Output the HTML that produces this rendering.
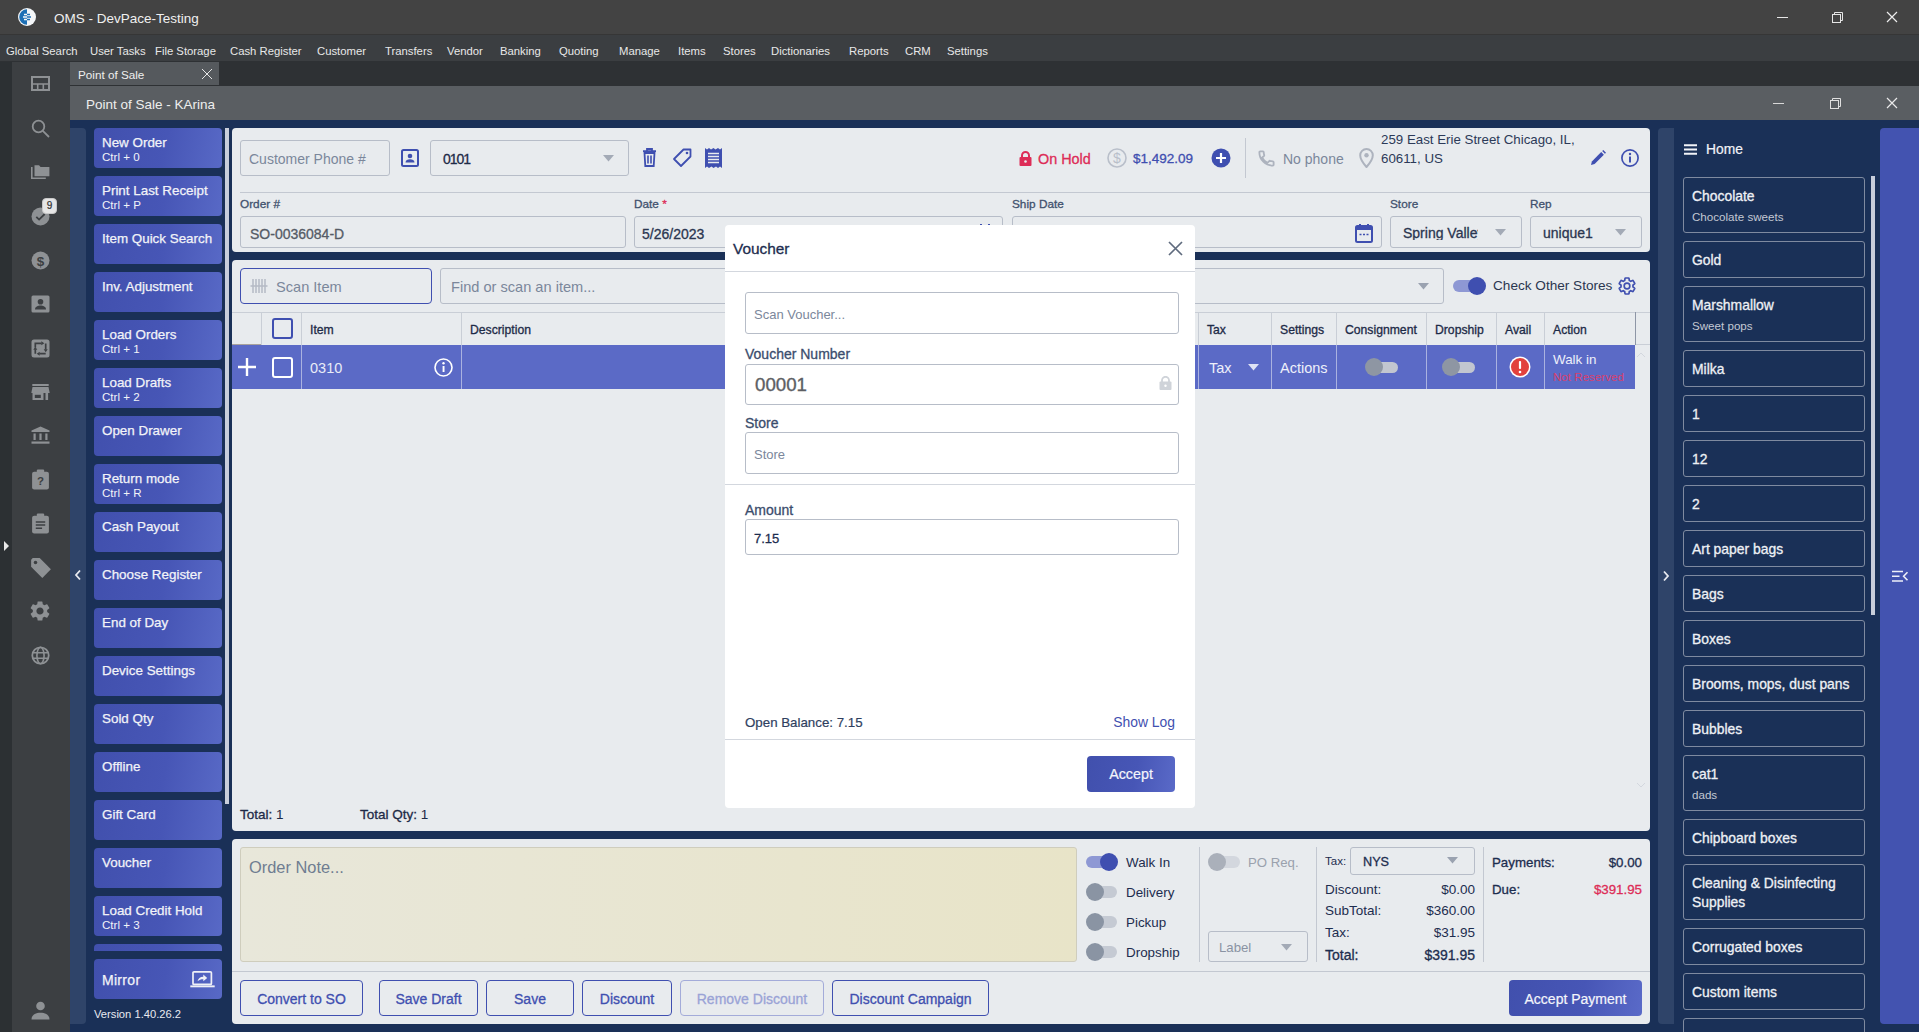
<!DOCTYPE html>
<html><head><meta charset="utf-8">
<style>
*{box-sizing:border-box;margin:0;padding:0}
html,body{width:1919px;height:1032px;overflow:hidden;background:#1a3057;font-family:"Liberation Sans",sans-serif}
.a{position:absolute}
.t{position:absolute;white-space:nowrap;line-height:1}
#titlebar{left:0;top:0;width:1919px;height:34px;background:#434343}
#menubar{left:0;top:35px;width:1919px;height:26px;background:#3b3e41;box-shadow:0 -1px 0 #363636}
#strip{left:0;top:61px;width:12px;height:971px;background:#2c3033}
#iconbar{left:12px;top:62px;width:58px;height:970px;background:#3c3f42}
#tabstrip{left:70px;top:61px;width:1849px;height:25px;background:#2e3134}
#tab{left:70px;top:62px;width:149px;height:23px;background:#55595d}
#winhdr{left:70px;top:86px;width:1849px;height:34px;background:#5a5e62}
#body{left:70px;top:120px;width:1849px;height:912px;background:#1a3057}
.menu{top:45.5px;font-size:11.3px;color:#e8e8e8}
.btn{position:absolute;left:94px;width:128px;height:40px;border-radius:4px;background:linear-gradient(100deg,#4150ad 0%,#4756b6 55%,#5869c6 100%);color:#f2f3f8}
.btn .l1{position:absolute;left:8px;top:8px;font-size:13.4px;-webkit-text-stroke:0.25px currentColor;white-space:nowrap;line-height:1}
.btn .l2{position:absolute;left:8px;top:22.5px;font-size:11.6px;white-space:nowrap;line-height:1}
.panel{position:absolute;background:#e8ebee;border-radius:4px}
.card{position:absolute;left:1683px;width:182px;border:1px solid #7f8aa0;border-radius:3px;color:#eef0f5}
.card .n{position:absolute;left:8px;font-size:13.9px;-webkit-text-stroke:0.3px currentColor;white-space:nowrap;line-height:1}
.card .s{position:absolute;left:8px;font-size:11.6px;color:#c3c8d3;white-space:nowrap;line-height:1}
.inp{border:1px solid #b7bdc8;border-radius:3px;background:#e8ebee}
.lbl{font-size:11.8px;-webkit-text-stroke:0.3px currentColor;color:#41516d;top:200.5px}
.vl{width:1px;background:#c9ced6}
.vl2{top:345px;width:1px;height:44px;background:#aab2e0}
.th{top:324px;font-size:12.2px;-webkit-text-stroke:0.3px currentColor;color:#1d2a47}
.tg{font-size:13.4px;color:#1d2d4f}
.sm{font-size:13.5px;color:#1d2d4f}
.r{width:100px;text-align:right}
.ob{position:absolute;top:980px;height:36px;border:1.5px solid #3f4fb0;border-radius:4px;color:#3f4fb0;font-size:14px;-webkit-text-stroke:0.3px currentColor;text-align:center;line-height:33px;padding-top:1.5px;white-space:nowrap}
.minp{border:1px solid #b7bdc8;border-radius:3px;background:#fff}
.mlbl{font-size:14px;-webkit-text-stroke:0.3px currentColor;color:#3b4d6d}
.sb{-webkit-text-stroke:0.3px currentColor}
.ico{position:absolute;left:30px;width:20px;height:20px}
</style></head><body>
<div id="titlebar" class="a"></div>
<div id="menubar" class="a"></div>
<div id="strip" class="a"></div>
<div class="a" style="left:0;top:61px;width:70px;height:1px;background:#2e3134"></div>
<div id="iconbar" class="a"></div>
<div id="tabstrip" class="a"></div>
<div id="tab" class="a"></div>
<div id="winhdr" class="a"></div>
<div id="body" class="a"></div>

<!-- title -->
<div class="t" style="left:54px;top:11.5px;font-size:13.5px;color:#f0f0f0">OMS - DevPace-Testing</div>

<!-- menu -->
<div class="t menu" style="left:6px">Global Search</div>
<div class="t menu" style="left:90px">User Tasks</div>
<div class="t menu" style="left:155px">File Storage</div>
<div class="t menu" style="left:230px">Cash Register</div>
<div class="t menu" style="left:317px">Customer</div>
<div class="t menu" style="left:385px">Transfers</div>
<div class="t menu" style="left:447px">Vendor</div>
<div class="t menu" style="left:500px">Banking</div>
<div class="t menu" style="left:559px">Quoting</div>
<div class="t menu" style="left:619px">Manage</div>
<div class="t menu" style="left:678px">Items</div>
<div class="t menu" style="left:723px">Stores</div>
<div class="t menu" style="left:771px">Dictionaries</div>
<div class="t menu" style="left:849px">Reports</div>
<div class="t menu" style="left:905px">CRM</div>
<div class="t menu" style="left:947px">Settings</div>

<div class="t" style="left:78px;top:69px;font-size:11.7px;color:#eee">Point of Sale</div>
<div class="t" style="left:86px;top:97.5px;font-size:13.5px;color:#eee">Point of Sale - KArina</div>

<!-- left collapse panel -->
<div class="a" style="left:70px;top:128px;width:16px;height:896px;background:#2f4469;border-radius:0 4px 4px 0"></div>

<!-- buttons -->
<div class="btn" style="top:128px"><div class="l1">New Order</div><div class="l2">Ctrl + 0</div></div>
<div class="btn" style="top:176px"><div class="l1">Print Last Receipt</div><div class="l2">Ctrl + P</div></div>
<div class="btn" style="top:224px"><div class="l1">Item Quick Search</div></div>
<div class="btn" style="top:272px"><div class="l1">Inv. Adjustment</div></div>
<div class="btn" style="top:320px"><div class="l1">Load Orders</div><div class="l2">Ctrl + 1</div></div>
<div class="btn" style="top:368px"><div class="l1">Load Drafts</div><div class="l2">Ctrl + 2</div></div>
<div class="btn" style="top:416px"><div class="l1">Open Drawer</div></div>
<div class="btn" style="top:464px"><div class="l1">Return mode</div><div class="l2">Ctrl + R</div></div>
<div class="btn" style="top:512px"><div class="l1">Cash Payout</div></div>
<div class="btn" style="top:560px"><div class="l1">Choose Register</div></div>
<div class="btn" style="top:608px"><div class="l1">End of Day</div></div>
<div class="btn" style="top:656px"><div class="l1">Device Settings</div></div>
<div class="btn" style="top:704px"><div class="l1">Sold Qty</div></div>
<div class="btn" style="top:752px"><div class="l1">Offline</div></div>
<div class="btn" style="top:800px"><div class="l1">Gift Card</div></div>
<div class="btn" style="top:848px"><div class="l1">Voucher</div></div>
<div class="btn" style="top:896px"><div class="l1">Load Credit Hold</div><div class="l2">Ctrl + 3</div></div>
<div class="btn" style="top:944px;height:7px;border-radius:4px 4px 0 0"></div>
<div class="btn" style="top:959px"><div class="l1" style="top:14px;font-size:14px;letter-spacing:0.3px">Mirror</div></div>
<div class="t" style="left:94px;top:1008.5px;font-size:11.2px;color:#e8eaf0">Version 1.40.26.2</div>
<!-- left scrollbar -->
<div class="a" style="left:225px;top:128px;width:4px;height:676px;background:#c8cedb"></div>

<!-- main panels -->
<div class="panel" style="left:232px;top:128px;width:1418px;height:124px"></div>
<div class="panel" style="left:232px;top:260px;width:1418px;height:571px"></div>
<div class="panel" style="left:232px;top:839px;width:1418px;height:185px"></div>

<!-- right collapse panel -->
<div class="a" style="left:1658px;top:128px;width:16px;height:896px;background:#2f4469;border-radius:4px 0 0 4px"></div>
<!-- right purple -->
<div class="a" style="left:1880px;top:128px;width:39px;height:896px;background:#4353b0;border-radius:4px 0 0 4px"></div>



<!-- logo -->
<svg class="a" style="left:18px;top:8px" width="18" height="18" viewBox="0 0 18 18">
<circle cx="9" cy="9" r="9" fill="#f4f6f8"/>
<path d="M9 1.2 A7.8 7.8 0 0 0 9 16.8 Z" fill="#1c6fb5"/>
<path d="M6 6.5h6M5 9h8M6 11.5h6" stroke="#1c6fb5" stroke-width="1.6"/>
<path d="M6 6.5h3M5 9h4M6 11.5h3" stroke="#f4f6f8" stroke-width="1.6"/>
</svg>
<!-- title controls -->
<div class="a" style="left:1777px;top:17px;width:11px;height:1px;background:#e6e6e6"></div>
<svg class="a" style="left:1831px;top:11px" width="13" height="13" viewBox="0 0 13 13"><rect x="1.5" y="3.5" width="8" height="8" fill="none" stroke="#e6e6e6" stroke-width="1"/><path d="M3.5 3.5V1.5h8v8h-2" fill="none" stroke="#e6e6e6" stroke-width="1"/></svg>
<svg class="a" style="left:1886px;top:11px" width="12" height="12" viewBox="0 0 12 12"><path d="M1 1L11 11M11 1L1 11" stroke="#ededed" stroke-width="1.2"/></svg>
<!-- tab close -->
<svg class="a" style="left:201px;top:68px" width="12" height="12" viewBox="0 0 12 12"><path d="M1 1L11 11M11 1L1 11" stroke="#e6e6e6" stroke-width="1"/></svg>
<!-- window header controls -->
<div class="a" style="left:1773px;top:103px;width:11px;height:1px;background:#d8d8d8"></div>
<svg class="a" style="left:1829px;top:97px" width="13" height="13" viewBox="0 0 13 13"><rect x="1.5" y="3.5" width="8" height="8" fill="none" stroke="#e0e0e0" stroke-width="1"/><path d="M3.5 3.5V1.5h8v8h-2" fill="none" stroke="#e0e0e0" stroke-width="1"/></svg>
<svg class="a" style="left:1886px;top:97px" width="12" height="12" viewBox="0 0 12 12"><path d="M1 1L11 11M11 1L1 11" stroke="#eaeaea" stroke-width="1.2"/></svg>

<!-- left icon bar icons -->
<svg class="a" style="left:31px;top:76px" width="19" height="15" viewBox="0 0 19 15"><rect x="1" y="1" width="17" height="13" fill="none" stroke="#8e9194" stroke-width="2"/><path d="M1 8h17M6.7 8v6M12.3 8v6" stroke="#8e9194" stroke-width="1.6"/></svg>
<svg class="a" style="left:31px;top:119px" width="19" height="19" viewBox="0 0 19 19"><circle cx="7.5" cy="7.5" r="5.8" fill="none" stroke="#8e9194" stroke-width="1.8"/><path d="M11.6 11.6L18 18" stroke="#8e9194" stroke-width="1.8"/></svg>
<svg class="a" style="left:31px;top:164px" width="19" height="15" viewBox="0 0 19 15"><path d="M0.8 3v11.2h14" fill="none" stroke="#8e9194" stroke-width="1.6"/><path d="M3.5 1.2h4.5l1.6 1.8h8.8v9.3H3.5z" fill="#8e9194"/></svg>
<svg class="a" style="left:31px;top:207px" width="19" height="19" viewBox="0 0 19 19"><circle cx="9.5" cy="9.5" r="9" fill="#8e9194"/><path d="M5.3 9.8l2.8 2.8 5.6-5.6" fill="none" stroke="#3c3f42" stroke-width="1.8"/></svg>
<div class="a" style="left:42px;top:198px;width:15px;height:16px;background:#e6e6e6;border-radius:4px;border:1px solid #c8c8c8;font-size:10px;line-height:14px;text-align:center;color:#333;-webkit-text-stroke:0.2px currentColor">9</div>
<svg class="a" style="left:31px;top:251px" width="19" height="19" viewBox="0 0 19 19"><circle cx="9.5" cy="9.5" r="9" fill="#8e9194"/><text x="9.5" y="14.8" font-family="Liberation Sans" font-weight="bold" font-size="13.5" text-anchor="middle" fill="#3c3f42">$</text></svg>
<svg class="a" style="left:31px;top:295px" width="19" height="18" viewBox="0 0 19 18"><rect x="0.5" y="0.5" width="18" height="17" rx="1.5" fill="#8e9194"/><circle cx="9.5" cy="6.8" r="2.8" fill="#3c3f42"/><path d="M4 14.5c0-3 3-4 5.5-4s5.5 1 5.5 4z" fill="#3c3f42"/></svg>
<svg class="a" style="left:31px;top:339px" width="19" height="19" viewBox="0 0 19 19"><rect x="0.5" y="0.5" width="18" height="18" rx="2.5" fill="#8e9194"/><path d="M4.3 8.5V4.3h6.2M14.7 4.5v6M14.7 14.7H8.5M4.3 14.7v-4.5" fill="none" stroke="#3c3f42" stroke-width="1.7"/><path d="M10.3 2.3l3 2-3 2zM12.7 10.2l2 3 2-3zM8.7 12.7l-3 2 3 2zM2.3 10.7l2-3 2 3z" fill="#3c3f42"/></svg>
<svg class="a" style="left:31px;top:384px" width="19" height="17" viewBox="0 0 19 17"><rect x="1.3" y="0" width="16.4" height="2" fill="#8e9194"/><path d="M1.5 3h16l1.2 6H0.3z" fill="#8e9194"/><path d="M1.5 9h11v7h-11z" fill="#8e9194"/><rect x="3.8" y="10.8" width="6" height="3.2" fill="#3c3f42"/><rect x="14.5" y="9" width="2.6" height="7" fill="#8e9194"/></svg>
<svg class="a" style="left:31px;top:426px" width="19" height="18" viewBox="0 0 19 18"><path d="M9.5 0.5L18.5 4.5V6H0.5V4.5z" fill="#8e9194"/><path d="M2.5 7.5h2.2v6.5H2.5zM8.4 7.5h2.2v6.5H8.4zM14.3 7.5h2.2v6.5h-2.2z" fill="#8e9194"/><rect x="0.5" y="15.5" width="18" height="2.2" fill="#8e9194"/></svg>
<svg class="a" style="left:31px;top:469px" width="19" height="21" viewBox="0 0 17 20"><rect x="0.5" y="2.5" width="16" height="17" rx="2" fill="#8e9194"/><rect x="5" y="0.5" width="7" height="4" rx="1" fill="#8e9194"/><text x="8.5" y="15.5" font-family="Liberation Sans" font-weight="bold" font-size="11" text-anchor="middle" fill="#3c3f42">?</text></svg>
<svg class="a" style="left:31px;top:513px" width="19" height="21" viewBox="0 0 17 20"><rect x="0.5" y="2.5" width="16" height="17" rx="2" fill="#8e9194"/><rect x="5" y="0.5" width="7" height="4" rx="1" fill="#8e9194"/><path d="M4 8.5h9M4 11.5h9M4 14.5h6" stroke="#3c3f42" stroke-width="1.5"/></svg>
<svg class="a" style="left:30px;top:557px" width="22" height="22" viewBox="0 0 20 20"><path d="M1 2.5V8.8L11.2 19 19 11.2 8.8 1H2.5z" fill="#8e9194"/><circle cx="5" cy="5" r="1.6" fill="#3c3f42"/></svg>
<svg class="a" style="left:28px;top:599px" width="24" height="24" viewBox="0 0 24 24"><path fill="#8e9194" d="M19.14 12.94c.04-.3.06-.61.06-.94 0-.32-.02-.64-.07-.94l2.03-1.58a.49.49 0 0 0 .12-.61l-1.92-3.32a.488.488 0 0 0-.59-.22l-2.39.96c-.5-.38-1.03-.7-1.62-.94l-.36-2.54a.484.484 0 0 0-.48-.41h-3.84c-.24 0-.43.17-.47.41l-.36 2.54c-.59.24-1.13.57-1.62.94l-2.39-.96c-.22-.08-.47 0-.59.22L2.74 8.87c-.12.21-.08.47.12.61l2.03 1.58c-.05.3-.09.63-.09.94s.02.64.07.94l-2.03 1.58a.49.49 0 0 0-.12.61l1.92 3.32c.12.22.37.29.59.22l2.39-.96c.5.38 1.03.7 1.62.94l.36 2.54c.05.24.24.41.48.41h3.84c.24 0 .44-.17.47-.41l.36-2.54c.59-.24 1.13-.56 1.62-.94l2.39.96c.22.08.47 0 .59-.22l1.92-3.32c.12-.22.07-.47-.12-.61l-2.01-1.58zM12 15.6c-1.98 0-3.6-1.62-3.6-3.6s1.62-3.6 3.6-3.6 3.6 1.62 3.6 3.6-1.62 3.6-3.6 3.6z"/></svg>
<svg class="a" style="left:31px;top:646px" width="19" height="19" viewBox="0 0 19 19"><circle cx="9.5" cy="9.5" r="8.2" fill="none" stroke="#8e9194" stroke-width="1.8"/><ellipse cx="9.5" cy="9.5" rx="3.6" ry="8.2" fill="none" stroke="#8e9194" stroke-width="1.6"/><path d="M1.5 6.8h16M1.5 12.2h16" stroke="#8e9194" stroke-width="1.6"/></svg>
<svg class="a" style="left:31px;top:1001px" width="19" height="19" viewBox="0 0 19 19"><circle cx="9.5" cy="5" r="4.3" fill="#8e9194"/><path d="M0.5 18.5c0-4.5 4-6.8 9-6.8s9 2.3 9 6.8z" fill="#8e9194"/></svg>
<!-- left strip arrow -->
<svg class="a" style="left:3px;top:540px" width="7" height="12" viewBox="0 0 7 12"><path d="M1 1l5 5-5 5z" fill="#e8e8e8"/></svg>
<!-- collapse arrows -->
<svg class="a" style="left:74px;top:569px" width="8" height="12" viewBox="0 0 8 12"><path d="M6 1.5L2 6l4 4.5" fill="none" stroke="#e8eaf0" stroke-width="1.8"/></svg>
<svg class="a" style="left:1662px;top:570px" width="8" height="12" viewBox="0 0 8 12"><path d="M2 1.5L6 6l-4 4.5" fill="none" stroke="#e8eaf0" stroke-width="1.8"/></svg>
<!-- mirror icon -->
<svg class="a" style="left:190px;top:970px" width="25" height="18" viewBox="0 0 25 18"><rect x="3" y="1.8" width="18.4" height="12.6" rx="1" fill="none" stroke="#eef0f6" stroke-width="1.7"/><rect x="0.3" y="15.4" width="24.4" height="1.9" fill="#eef0f6"/><path d="M7.5 11.3c.6-2.8 2.6-4.6 5.8-4.6V4.6l3.9 3.3-3.9 3.3V9.2c-2.5 0-4.3.6-5.8 2.1z" fill="#eef0f6"/></svg>


<!-- ===== TOP PANEL ===== -->
<div class="a inp" style="left:240px;top:140px;width:150px;height:36px"></div>
<div class="t" style="left:249px;top:152px;font-size:14px;color:#7b879b">Customer Phone #</div>
<svg class="a" style="left:401px;top:149px" width="18" height="18" viewBox="0 0 18 18"><rect x="1" y="1" width="16" height="16" rx="1.5" fill="none" stroke="#3f4fb0" stroke-width="2"/><circle cx="9" cy="7" r="2.3" fill="#3f4fb0"/><path d="M4.5 13.5c0-2.3 2.2-3.2 4.5-3.2s4.5.9 4.5 3.2z" fill="#3f4fb0"/></svg>
<div class="a inp" style="left:430px;top:140px;width:199px;height:36px"></div>
<div class="t" style="left:443px;top:152px;font-size:14px;-webkit-text-stroke:0.3px currentColor;color:#1d2a47;letter-spacing:-1px">0101</div>
<svg class="a" style="left:603px;top:155px" width="11" height="7" viewBox="0 0 11 7"><path d="M0 0h11L5.5 6.5z" fill="#a3aab6"/></svg>
<!-- trash -->
<svg class="a" style="left:642px;top:148px" width="15" height="19" viewBox="0 0 15 19"><path d="M1 3.2h13M5 3V1h5v2" fill="none" stroke="#3f4fb0" stroke-width="1.8"/><path d="M2.5 5h10l-.8 13H3.3z" fill="none" stroke="#3f4fb0" stroke-width="1.8"/><path d="M6 7.5v8M9 7.5v8" stroke="#3f4fb0" stroke-width="1.6"/></svg>
<!-- tag -->
<svg class="a" style="left:672px;top:148px" width="20" height="20" viewBox="0 0 20 20"><path d="M11.5 1.5h7v7L9 18 2 11z" fill="none" stroke="#3f4fb0" stroke-width="1.8" stroke-linejoin="round"/><circle cx="15" cy="5" r="1.3" fill="#3f4fb0"/></svg>
<!-- receipt -->
<svg class="a" style="left:704px;top:148px" width="19" height="20" viewBox="0 0 19 20"><path d="M1 0l2 1.5L5 0l2 1.5L9.5 0l2 1.5L14 0l2 1.5L18 0v20l-2-1.5L14 20l-2-1.5L9.5 20l-2-1.5L5 20l-2-1.5L1 20z" fill="#3f4fb0"/><path d="M4 5.5h11M4 8.5h11M4 11.5h11M4 14.5h11" stroke="#e8ebee" stroke-width="1.5"/></svg>

<!-- on hold -->
<svg class="a" style="left:1019px;top:151px" width="13" height="15" viewBox="0 0 13 15"><path d="M3 6.5V4.5a3.5 3.5 0 0 1 7 0v2" fill="none" stroke="#dd2c57" stroke-width="2"/><rect x="0.5" y="6" width="12" height="9" rx="1" fill="#dd2c57"/><circle cx="6.5" cy="10.5" r="1.3" fill="#e8ebee"/></svg>
<div class="t" style="left:1038px;top:151.7px;font-size:14.4px;-webkit-text-stroke:0.3px currentColor;color:#dd2c57">On Hold</div>
<svg class="a" style="left:1107px;top:148px" width="20" height="20" viewBox="0 0 20 20"><circle cx="10" cy="10" r="9" fill="none" stroke="#b9bfca" stroke-width="1.6"/><text x="10" y="15" font-family="Liberation Sans" font-size="14" text-anchor="middle" fill="#b9bfca">$</text></svg>
<div class="t" style="left:1133px;top:152.4px;font-size:13.5px;-webkit-text-stroke:0.3px currentColor;color:#3f4fb0">$1,492.09</div>
<svg class="a" style="left:1211px;top:148px" width="20" height="20" viewBox="0 0 20 20"><circle cx="10" cy="10" r="9.5" fill="#3f4fb0"/><path d="M10 5v10M5 10h10" stroke="#fff" stroke-width="2.2"/></svg>
<div class="a" style="left:1245px;top:138px;width:1px;height:40px;background:#c3c8d1"></div>
<svg class="a" style="left:1257px;top:149px" width="19" height="19" viewBox="0 0 24 24"><path fill="none" stroke="#adb3be" stroke-width="2.3" d="M6.6 10.8c1.4 2.8 3.8 5.1 6.6 6.6l2.2-2.2c.3-.3.7-.4 1-.2 1.1.4 2.3.6 3.6.6.6 0 1 .4 1 1V20c0 .6-.4 1-1 1C10.6 21 3 13.4 3 4c0-.6.4-1 1-1h3.5c.6 0 1 .4 1 1 0 1.3.2 2.5.6 3.6.1.3 0 .7-.2 1z"/></svg>
<div class="t" style="left:1283px;top:152px;font-size:14px;color:#7b879b">No phone</div>
<svg class="a" style="left:1359px;top:148px" width="15" height="20" viewBox="0 0 15 20"><path d="M7.5 1a6.3 6.3 0 0 0-6.3 6.3c0 4.7 6.3 11.7 6.3 11.7s6.3-7 6.3-11.7A6.3 6.3 0 0 0 7.5 1z" fill="none" stroke="#adb3be" stroke-width="2"/><circle cx="7.5" cy="7.3" r="2.2" fill="#adb3be"/></svg>
<div class="t" style="left:1381px;top:132.7px;font-size:13.3px;color:#2c3a58">259 East Erie Street Chicago, IL,</div>
<div class="t" style="left:1381px;top:151.7px;font-size:13.3px;color:#2c3a58">60611, US</div>
<svg class="a" style="left:1590px;top:150px" width="16" height="16" viewBox="0 0 16 16"><path d="M1 15l.9-3.6L11.2 2.1l2.7 2.7-9.3 9.3z" fill="#3f4fb0"/><path d="M12.2 1.1l1.1-1.1 2.7 2.7-1.1 1.1z" fill="#3f4fb0"/></svg>
<svg class="a" style="left:1621px;top:149px" width="18" height="18" viewBox="0 0 18 18"><circle cx="9" cy="9" r="8.1" fill="none" stroke="#3f4fb0" stroke-width="1.7"/><rect x="8" y="7.5" width="2" height="6" fill="#3f4fb0"/><circle cx="9" cy="5" r="1.2" fill="#3f4fb0"/></svg>

<div class="a" style="left:240px;top:192px;width:1410px;height:1px;background:#c3c8d1"></div>
<div class="t lbl" style="left:240px;top:199px">Order #</div>
<div class="t lbl" style="left:634px;top:199px">Date <span style="color:#dd2c57">*</span></div>
<div class="t lbl" style="left:1012px;top:199px">Ship Date</div>
<div class="t lbl" style="left:1390px;top:199px">Store</div>
<div class="t lbl" style="left:1530px;top:199px">Rep</div>
<div class="a inp" style="left:240px;top:216px;width:386px;height:32px"></div>
<div class="t" style="left:250px;top:226.6px;font-size:14px;-webkit-text-stroke:0.3px currentColor;color:#555b66">SO-0036084-D</div>
<div class="a inp" style="left:634px;top:216px;width:369px;height:32px"></div>
<div class="t" style="left:642px;top:226.6px;font-size:14px;-webkit-text-stroke:0.3px currentColor;color:#2b3650">5/26/2023</div>
<div class="a inp" style="left:1012px;top:216px;width:370px;height:32px"></div>
<svg class="a" style="left:1355px;top:223px" width="18" height="20" viewBox="0 0 18 20"><rect x="1" y="3" width="16" height="16" rx="1.5" fill="none" stroke="#3f4fb0" stroke-width="2"/><rect x="1" y="3" width="16" height="4" fill="#3f4fb0"/><path d="M5 1v4M13 1v4" stroke="#3f4fb0" stroke-width="2"/><path d="M4.5 11.5h2M8 11.5h2M11.5 11.5h2" stroke="#3f4fb0" stroke-width="1.6"/></svg>
<div class="a inp" style="left:1390px;top:216px;width:132px;height:32px"></div>
<div class="t" style="left:1403px;top:226px;font-size:14px;-webkit-text-stroke:0.3px currentColor;color:#2b3650;width:75px;overflow:hidden">Spring Valley</div>
<svg class="a" style="left:1495px;top:229px" width="11" height="7" viewBox="0 0 11 7"><path d="M0 0h11L5.5 6.5z" fill="#a3aab6"/></svg>
<div class="a inp" style="left:1530px;top:216px;width:112px;height:32px"></div>
<div class="t" style="left:1543px;top:226px;font-size:14px;-webkit-text-stroke:0.3px currentColor;color:#2b3650">unique1</div>
<svg class="a" style="left:1615px;top:229px" width="11" height="7" viewBox="0 0 11 7"><path d="M0 0h11L5.5 6.5z" fill="#a3aab6"/></svg>


<!-- ===== ITEM PANEL ===== -->
<div class="a" style="left:240px;top:268px;width:192px;height:36px;border:1px solid #3f4fb0;border-radius:4px"></div>
<svg class="a" style="left:250px;top:278px" width="18" height="16" viewBox="0 0 18 16"><path d="M3 1v14M6 1v14M9 1v14M12 1v14M15 1v14" stroke="#b4bac5" stroke-width="1.5"/><path d="M0.5 8h17" stroke="#b4bac5" stroke-width="1.5"/></svg>
<div class="t" style="left:276px;top:279.7px;font-size:14.6px;color:#7b879b">Scan Item</div>
<div class="a inp" style="left:440px;top:268px;width:1004px;height:36px"></div>
<div class="t" style="left:451px;top:279.7px;font-size:14.6px;color:#7b879b">Find or scan an item...</div>
<svg class="a" style="left:1418px;top:283px" width="11" height="7" viewBox="0 0 11 7"><path d="M0 0h11L5.5 6.5z" fill="#9aa2b0"/></svg>
<!-- check other stores toggle -->
<div class="a" style="left:1453px;top:280px;width:30px;height:12px;border-radius:6px;background:#8e98d4"></div>
<div class="a" style="left:1468px;top:277px;width:18px;height:18px;border-radius:50%;background:#3f4fb0"></div>
<div class="t" style="left:1493px;top:279px;font-size:13.6px;color:#2b3650">Check Other Stores</div>
<svg class="a" style="left:1617px;top:276px" width="20" height="20" viewBox="0 0 24 24"><path fill="none" stroke="#3f4fb0" stroke-width="2" d="M19.14 12.94c.04-.3.06-.61.06-.94 0-.32-.02-.64-.07-.94l2.03-1.58a.49.49 0 0 0 .12-.61l-1.92-3.32a.488.488 0 0 0-.59-.22l-2.39.96c-.5-.38-1.03-.7-1.62-.94l-.36-2.54a.484.484 0 0 0-.48-.41h-3.84c-.24 0-.43.17-.47.41l-.36 2.54c-.59.24-1.13.57-1.62.94l-2.39-.96c-.22-.08-.47 0-.59.22L2.74 8.87c-.12.21-.08.47.12.61l2.03 1.58c-.05.3-.09.63-.09.94s.02.64.07.94l-2.03 1.58a.49.49 0 0 0-.12.61l1.92 3.32c.12.22.37.29.59.22l2.39-.96c.5.38 1.03.7 1.62.94l.36 2.54c.05.24.24.41.48.41h3.84c.24 0 .44-.17.47-.41l.36-2.54c.59-.24 1.13-.56 1.62-.94l2.39.96c.22.08.47 0 .59-.22l1.92-3.32c.12-.22.07-.47-.12-.61l-2.01-1.58z"/><circle cx="12" cy="12" r="3.4" fill="none" stroke="#3f4fb0" stroke-width="2"/></svg>

<!-- table header -->
<div class="a" style="left:232px;top:312px;width:1418px;height:1px;background:#c9ced6"></div>
<div class="a" style="left:232px;top:344px;width:30px;height:1px;background:#a9a29c"></div>
<div class="a vl" style="left:261px;top:312px;height:33px"></div>
<div class="a vl" style="left:301px;top:312px;height:77px"></div>
<div class="a vl" style="left:461px;top:312px;height:77px"></div>
<div class="a vl" style="left:1198px;top:312px;height:77px"></div>
<div class="a vl" style="left:1271px;top:312px;height:77px"></div>
<div class="a vl" style="left:1336px;top:312px;height:77px"></div>
<div class="a vl" style="left:1426px;top:312px;height:77px"></div>
<div class="a vl" style="left:1496px;top:312px;height:77px"></div>
<div class="a vl" style="left:1544px;top:312px;height:77px"></div>
<div class="a" style="left:1635px;top:312px;width:1px;height:33px;background:#8e96a6"></div>
<div class="a" style="left:1636px;top:344px;width:14px;height:1px;background:#c9ced6"></div>
<div class="a" style="left:272px;top:318px;width:21px;height:21px;border:2px solid #3f4fb0;border-radius:3px"></div>
<div class="t th" style="left:310px">Item</div>
<div class="t th" style="left:470px">Description</div>
<div class="t th" style="left:1207px">Tax</div>
<div class="t th" style="left:1280px">Settings</div>
<div class="t th" style="left:1345px">Consignment</div>
<div class="t th" style="left:1435px">Dropship</div>
<div class="t th" style="left:1505px">Avail</div>
<div class="t th" style="left:1553px">Action</div>
<!-- row -->
<div class="a" style="left:232px;top:345px;width:1403px;height:44px;background:#5b6ac6"></div>
<div class="a vl2" style="left:301px"></div>
<div class="a vl2" style="left:461px"></div>
<div class="a vl2" style="left:1198px"></div>
<div class="a vl2" style="left:1271px"></div>
<div class="a vl2" style="left:1336px"></div>
<div class="a vl2" style="left:1426px"></div>
<div class="a vl2" style="left:1496px"></div>
<div class="a vl2" style="left:1544px"></div>
<svg class="a" style="left:237px;top:357px" width="20" height="20" viewBox="0 0 20 20"><path d="M10 1v18M1 10h18" stroke="#fff" stroke-width="2.4"/></svg>
<div class="a" style="left:272px;top:357px;width:21px;height:21px;border:2px solid #fff;border-radius:3px"></div>
<div class="t" style="left:310px;top:361px;font-size:14.5px;color:#e9ecf7">0310</div>
<svg class="a" style="left:434px;top:358px" width="19" height="19" viewBox="0 0 19 19"><circle cx="9.5" cy="9.5" r="8.5" fill="none" stroke="#fff" stroke-width="1.6"/><rect x="8.6" y="8" width="1.9" height="6" fill="#fff"/><circle cx="9.5" cy="5.3" r="1.2" fill="#fff"/></svg>
<div class="t" style="left:1209px;top:361px;font-size:14.5px;color:#eef0fa">Tax</div>
<svg class="a" style="left:1248px;top:364px" width="11" height="7" viewBox="0 0 11 7"><path d="M0 0h11L5.5 6.5z" fill="#dfe3f5"/></svg>
<div class="t" style="left:1280px;top:361px;font-size:14.5px;color:#eef0fa">Actions</div>
<div class="a" style="left:1369px;top:362px;width:29px;height:11px;border-radius:6px;background:#c2c6d0"></div>
<div class="a" style="left:1365px;top:358px;width:18px;height:18px;border-radius:50%;background:#8e96a3"></div>
<div class="a" style="left:1446px;top:362px;width:29px;height:11px;border-radius:6px;background:#c2c6d0"></div>
<div class="a" style="left:1442px;top:358px;width:18px;height:18px;border-radius:50%;background:#8e96a3"></div>
<svg class="a" style="left:1509px;top:356px" width="22" height="22" viewBox="0 0 22 22"><circle cx="11" cy="11" r="10.5" fill="#fff"/><circle cx="11" cy="11" r="9" fill="#e2413d"/><rect x="9.9" y="5" width="2.2" height="8" rx="1" fill="#fff"/><circle cx="11" cy="16" r="1.3" fill="#fff"/></svg>
<div class="t" style="left:1553px;top:353px;font-size:13.4px;color:#eef0fa">Walk in</div>
<div class="t" style="left:1553px;top:371px;font-size:11.6px;color:#d8406e">Not Reserved</div>
<!-- scroll arrows faint -->
<svg class="a" style="left:1636px;top:352px" width="10" height="6" viewBox="0 0 10 6"><path d="M1 5l4-4 4 4" fill="none" stroke="#d3d7de" stroke-width="1"/></svg>
<svg class="a" style="left:1636px;top:782px" width="10" height="6" viewBox="0 0 10 6"><path d="M1 1l4 4 4-4" fill="none" stroke="#d3d7de" stroke-width="1"/></svg>

<div class="t" style="left:240px;top:808px;font-size:13.5px;color:#1d2a47"><span class="sb">Total:</span> 1</div>
<div class="t" style="left:360px;top:808px;font-size:13.5px;color:#1d2a47"><span class="sb">Total Qty:</span> 1</div>


<!-- ===== BOTTOM PANEL ===== -->
<div class="a" style="left:240px;top:847px;width:837px;height:115px;border:1px solid #cfcdbd;border-radius:3px;background:linear-gradient(90deg,#e8e7da 0%,#e8e4c8 100%)"></div>
<div class="t" style="left:249px;top:859.2px;font-size:16.4px;color:#6f7d91">Order Note...</div>
<!-- toggles -->
<div class="a" style="left:1086px;top:856px;width:30px;height:12px;border-radius:6px;background:#8e98d4"></div>
<div class="a" style="left:1100px;top:853px;width:18px;height:18px;border-radius:50%;background:#3f4fb0"></div>
<div class="t tg" style="left:1126px;top:855.7px">Walk In</div>
<div class="a" style="left:1087px;top:886px;width:30px;height:12px;border-radius:6px;background:#c5cad3"></div>
<div class="a" style="left:1086px;top:883px;width:18px;height:18px;border-radius:50%;background:#8a94a3"></div>
<div class="t tg" style="left:1126px;top:885.7px">Delivery</div>
<div class="a" style="left:1087px;top:916px;width:30px;height:12px;border-radius:6px;background:#c5cad3"></div>
<div class="a" style="left:1086px;top:913px;width:18px;height:18px;border-radius:50%;background:#8a94a3"></div>
<div class="t tg" style="left:1126px;top:915.7px">Pickup</div>
<div class="a" style="left:1087px;top:946px;width:30px;height:12px;border-radius:6px;background:#c5cad3"></div>
<div class="a" style="left:1086px;top:943px;width:18px;height:18px;border-radius:50%;background:#8a94a3"></div>
<div class="t tg" style="left:1126px;top:945.7px">Dropship</div>
<div class="a" style="left:1199px;top:847px;width:1px;height:115px;background:#c3c8d1"></div>
<div class="a" style="left:1316px;top:847px;width:1px;height:115px;background:#c3c8d1"></div>
<div class="a" style="left:1483px;top:847px;width:1px;height:115px;background:#c3c8d1"></div>
<div class="a" style="left:1209px;top:856px;width:31px;height:12px;border-radius:6px;background:#d3d7de"></div>
<div class="a" style="left:1208px;top:853px;width:18px;height:18px;border-radius:50%;background:#aab0ba"></div>
<div class="t" style="left:1248px;top:855.8px;font-size:13.2px;color:#9aa1ad">PO Req.</div>
<div class="a inp" style="left:1208px;top:931px;width:100px;height:31px"></div>
<div class="t" style="left:1219px;top:941.3px;font-size:13.2px;color:#8a93a3">Label</div>
<svg class="a" style="left:1281px;top:944px" width="11" height="7" viewBox="0 0 11 7"><path d="M0 0h11L5.5 6.5z" fill="#a3aab6"/></svg>
<div class="t" style="left:1325px;top:856.0px;font-size:11.5px;color:#1d2d4f">Tax:</div>
<div class="a inp" style="left:1350px;top:847px;width:125px;height:28px"></div>
<div class="t" style="left:1363px;top:855.8px;font-size:12.7px;-webkit-text-stroke:0.3px currentColor;color:#1d2d4f">NYS</div>
<svg class="a" style="left:1447px;top:857px" width="11" height="7" viewBox="0 0 11 7"><path d="M0 0h11L5.5 6.5z" fill="#9aa2b0"/></svg>
<div class="t sm" style="left:1325px;top:882.6px">Discount:</div>
<div class="t sm r" style="left:1375px;top:882.6px">$0.00</div>
<div class="t sm" style="left:1325px;top:904.3px">SubTotal:</div>
<div class="t sm r" style="left:1375px;top:904.3px">$360.00</div>
<div class="t sm" style="left:1325px;top:925.8px">Tax:</div>
<div class="t sm r" style="left:1375px;top:925.8px">$31.95</div>
<div class="t sm" style="left:1325px;top:947.5px;font-size:14px;-webkit-text-stroke:0.3px currentColor">Total:</div>
<div class="t sm r" style="left:1375px;top:947.5px;font-size:14px;-webkit-text-stroke:0.3px currentColor">$391.95</div>
<div class="t sm" style="left:1492px;top:856px;font-size:13.3px;-webkit-text-stroke:0.3px currentColor">Payments:</div>
<div class="t sm" style="left:1542px;width:100px;text-align:right;top:856px;font-size:13.3px;-webkit-text-stroke:0.3px currentColor">$0.00</div>
<div class="t sm" style="left:1492px;top:882.8px;font-size:13.3px;-webkit-text-stroke:0.3px currentColor">Due:</div>
<div class="t sm" style="left:1542px;width:100px;text-align:right;top:882.8px;font-size:13.3px;-webkit-text-stroke:0.3px currentColor;color:#dd2c57">$391.95</div>
<div class="a" style="left:232px;top:971px;width:1418px;height:1px;background:#c3c8d1"></div>
<!-- buttons -->
<div class="ob" style="left:240px;width:123px">Convert to SO</div>
<div class="ob" style="left:379px;width:99px">Save Draft</div>
<div class="ob" style="left:486px;width:88px">Save</div>
<div class="ob" style="left:582px;width:90px">Discount</div>
<div class="ob" style="left:680px;width:144px;border-color:#a3abd9;color:#9aa3d6">Remove Discount</div>
<div class="ob" style="left:832px;width:157px">Discount Campaign</div>
<div class="a" style="left:1509px;top:980px;width:133px;height:36px;border-radius:4px;background:linear-gradient(100deg,#4150ad 0%,#4756b6 55%,#5a6ac8 100%)"></div>
<div class="t" style="left:1509px;width:133px;text-align:center;top:991.8px;font-size:14px;-webkit-text-stroke:0.2px currentColor;color:#f4f5fb">Accept Payment</div>

<!-- ===== CATEGORIES ===== -->
<svg class="a" style="left:1684px;top:143.5px" width="13" height="11" viewBox="0 0 13 11"><path d="M0 1.2h13M0 5.5h13M0 9.8h13" stroke="#f2f3f8" stroke-width="2"/></svg>
<div class="t" style="left:1706px;top:143.2px;font-size:13.8px;-webkit-text-stroke:0.2px currentColor;color:#f2f3f8">Home</div>
<div class="a" style="left:1683px;top:170px;width:182px;height:862px;overflow:hidden">
<div class="card" style="left:0;top:7px;height:56px"><div class="n" style="top:12.1px">Chocolate</div><div class="s" style="top:33.1px">Chocolate sweets</div></div>
<div class="card" style="left:0;top:71px;height:37px"><div class="n" style="top:12.1px">Gold</div></div>
<div class="card" style="left:0;top:116px;height:56px"><div class="n" style="top:12.1px">Marshmallow</div><div class="s" style="top:33.1px">Sweet pops</div></div>
<div class="card" style="left:0;top:180px;height:37px"><div class="n" style="top:12.1px">Milka</div></div>
<div class="card" style="left:0;top:225px;height:37px"><div class="n" style="top:12.1px">1</div></div>
<div class="card" style="left:0;top:270px;height:37px"><div class="n" style="top:12.1px">12</div></div>
<div class="card" style="left:0;top:315px;height:37px"><div class="n" style="top:12.1px">2</div></div>
<div class="card" style="left:0;top:360px;height:37px"><div class="n" style="top:12.1px">Art paper bags</div></div>
<div class="card" style="left:0;top:405px;height:37px"><div class="n" style="top:12.1px">Bags</div></div>
<div class="card" style="left:0;top:450px;height:37px"><div class="n" style="top:12.1px">Boxes</div></div>
<div class="card" style="left:0;top:495px;height:37px"><div class="n" style="top:12.1px">Brooms, mops, dust pans</div></div>
<div class="card" style="left:0;top:540px;height:37px"><div class="n" style="top:12.1px">Bubbles</div></div>
<div class="card" style="left:0;top:585px;height:56px"><div class="n" style="top:12.1px">cat1</div><div class="s" style="top:33.1px">dads</div></div>
<div class="card" style="left:0;top:649px;height:37px"><div class="n" style="top:12.1px">Chipboard boxes</div></div>
<div class="card" style="left:0;top:694px;height:56px"><div class="n" style="top:12.1px">Cleaning &amp; Disinfecting</div><div class="n" style="top:30.6px">Supplies</div></div>
<div class="card" style="left:0;top:758px;height:37px"><div class="n" style="top:12.1px">Corrugated boxes</div></div>
<div class="card" style="left:0;top:803px;height:37px"><div class="n" style="top:12.1px">Custom items</div></div>
<div class="card" style="left:0;top:848px;height:37px"></div>
</div>
<div class="a" style="left:1871px;top:176px;width:4px;height:439px;background:#c8cedb"></div>
<svg class="a" style="left:1891px;top:570px" width="18" height="13" viewBox="0 0 18 13"><path d="M1 1.5h11M1 6.3h7.5M1 11h11" stroke="#eef0f8" stroke-width="1.6"/><path d="M16.5 2.2L12.6 6.3l3.9 4" fill="none" stroke="#eef0f8" stroke-width="1.6"/></svg>
<svg class="a" style="left:976px;top:223px" width="18" height="20" viewBox="0 0 18 20"><rect x="1" y="3" width="16" height="16" rx="1.5" fill="none" stroke="#3f4fb0" stroke-width="2"/><rect x="1" y="3" width="16" height="4" fill="#3f4fb0"/><path d="M5 1v4M13 1v4" stroke="#3f4fb0" stroke-width="2"/></svg>
<!--CONTENT-->
<!-- modal -->
<div class="a" style="left:725px;top:225px;width:470px;height:583px;background:#fff;border-radius:4px"></div>

<div class="t" style="left:733px;top:240.7px;font-size:15.4px;-webkit-text-stroke:0.3px currentColor;color:#1d2d4f">Voucher</div>
<svg class="a" style="left:1168px;top:241px" width="15" height="15" viewBox="0 0 15 15"><path d="M1 1l13 13M14 1L1 14" stroke="#5f6b7e" stroke-width="1.7"/></svg>
<div class="a" style="left:725px;top:271px;width:470px;height:1px;background:#d3d7de"></div>
<div class="a minp" style="left:745px;top:292px;width:434px;height:42px"></div>
<div class="t" style="left:754px;top:307.5px;font-size:13px;color:#7b879b">Scan Voucher...</div>
<div class="t mlbl" style="left:745px;top:347.4px">Voucher Number</div>
<div class="a minp" style="left:745px;top:364px;width:434px;height:41px"></div>
<div class="t" style="left:755px;top:376.1px;font-size:18.7px;-webkit-text-stroke:0.35px currentColor;color:#5c5e63">00001</div>
<svg class="a" style="left:1159px;top:376px" width="13" height="14" viewBox="0 0 13 14"><path d="M3 6V4.3a3.5 3.5 0 0 1 7 0V6" fill="none" stroke="#cfd3d9" stroke-width="1.8"/><rect x="0.5" y="5.5" width="12" height="8.5" rx="1" fill="#cfd3d9"/><circle cx="6.5" cy="9.7" r="1.2" fill="#fff"/></svg>
<div class="t mlbl" style="left:745px;top:416.4px">Store</div>
<div class="a minp" style="left:745px;top:432px;width:434px;height:42px"></div>
<div class="t" style="left:754px;top:447.5px;font-size:13px;color:#7b879b">Store</div>
<div class="a" style="left:725px;top:484px;width:470px;height:1px;background:#d3d7de"></div>
<div class="t mlbl" style="left:745px;top:502.9px">Amount</div>
<div class="a minp" style="left:745px;top:519px;width:434px;height:36px"></div>
<div class="t" style="left:754px;top:531.6px;font-size:13px;-webkit-text-stroke:0.3px currentColor;color:#1d2d4f">7.15</div>
<div class="t" style="left:745px;top:715.5px;font-size:13.3px;-webkit-text-stroke:0.2px currentColor;color:#2f3f5f">Open Balance: 7.15</div>
<div class="t" style="left:1075px;width:100px;text-align:right;top:716.0px;font-size:13.9px;color:#3f4fb0">Show Log</div>
<div class="a" style="left:725px;top:739px;width:470px;height:1px;background:#d3d7de"></div>
<div class="a" style="left:1087px;top:756px;width:88px;height:36px;border-radius:4px;background:linear-gradient(100deg,#4150ad 0%,#4756b6 55%,#5a6ac8 100%)"></div>
<div class="t" style="left:1087px;width:88px;text-align:center;top:767.4px;font-size:14.3px;-webkit-text-stroke:0.2px currentColor;color:#f4f5fb">Accept</div>

<!--MODAL-->
</body></html>
